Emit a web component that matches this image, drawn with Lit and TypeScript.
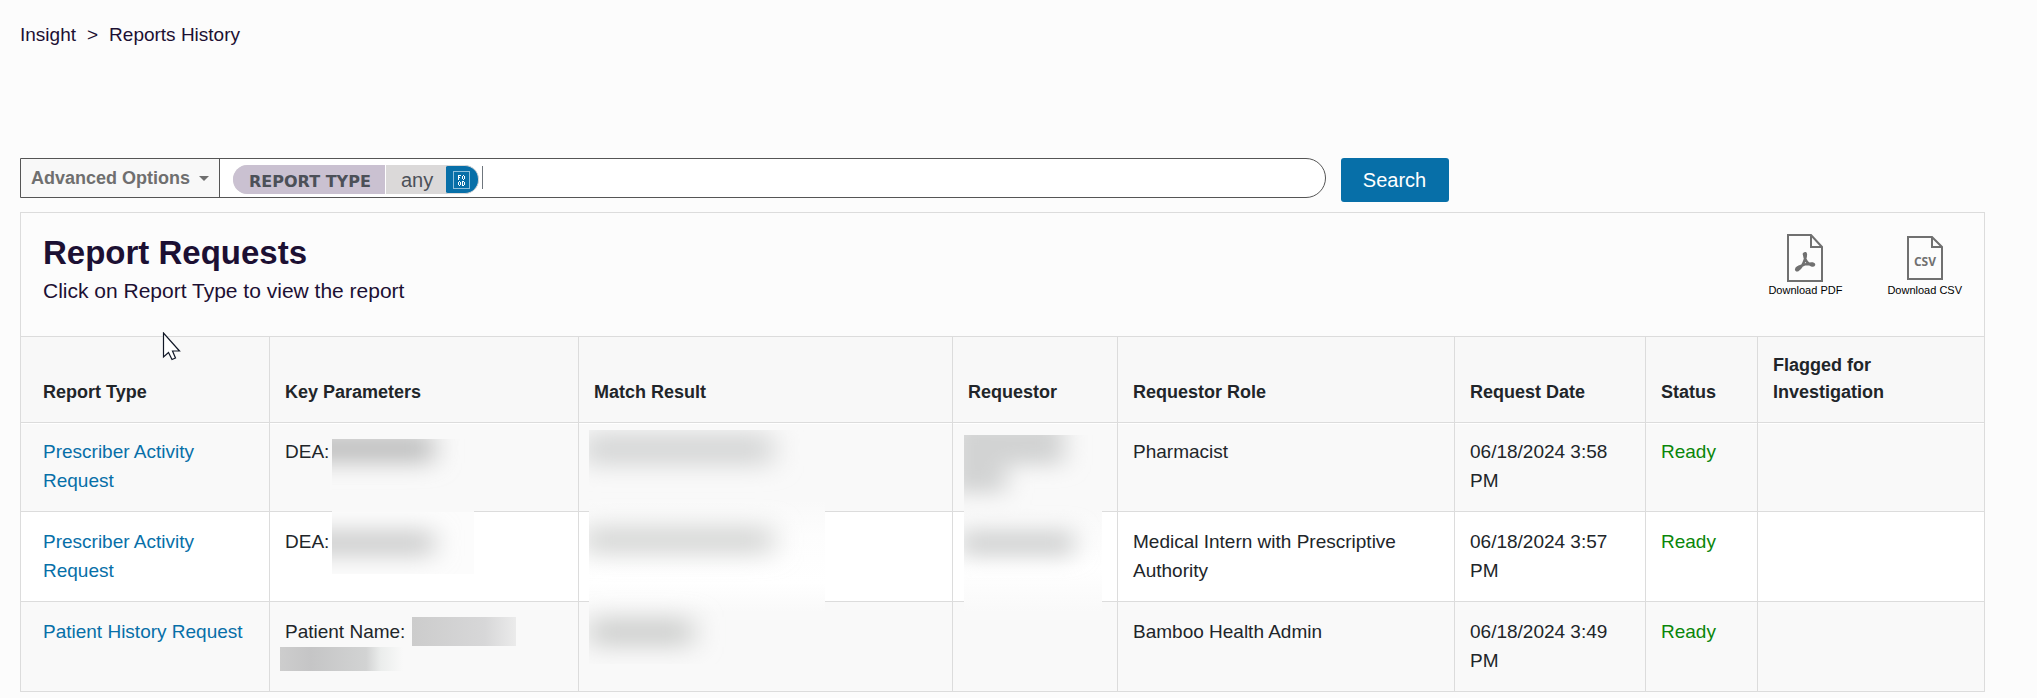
import { LitElement, html, css, svg } from "lit";
import { customElement } from "lit/decorators.js";

interface ReportRow {
  type: string;
  param: string;
  mask: string;
  role: string;
  date: string;
}

const ROWS: ReportRow[] = [
  { type: "Prescriber Activity Request", param: "DEA:", mask: "dea-a", role: "Pharmacist", date: "06/18/2024 3:58 PM" },
  { type: "Prescriber Activity Request", param: "DEA:", mask: "dea-b", role: "Medical Intern with Prescriptive Authority", date: "06/18/2024 3:57 PM" },
  { type: "Patient History Request", param: "Patient Name:", mask: "name", role: "Bamboo Health Admin", date: "06/18/2024 3:49 PM" },
];

const HEADS = ["Report Type", "Key Parameters", "Match Result", "Requestor", "Requestor Role", "Request Date", "Status", "Flagged for Investigation"];

@customElement("app-root")
export class AppRoot extends LitElement {
  static styles = css`
    :host {
      display: block;
      box-sizing: border-box;
      min-height: 100vh;
      padding: 20px 52px 0 20px;
      background: #fcfcfc;
      color: #212529;
      font: 19px/29px "Liberation Sans", Arial, sans-serif;
    }
    * { box-sizing: border-box; }
    .crumbs { display: flex; gap: 11px; color: #1c1033; }
    .crumbs a { color: inherit; text-decoration: none; }
    .search { display: flex; align-items: flex-start; gap: 15px; margin-top: 109px; width: 72.7%; }
    .bar { display: flex; flex: 1; height: 40px; border: 1px solid #555; border-radius: 0 20px 20px 0; background: #fff; overflow: hidden; }
    .advanced { display: flex; align-items: center; gap: 9px; width: 199px; padding: 0 10px; border: 0; border-right: 1px solid #555; background: #f8f8f8; color: #6f6f6f; font: bold 18px/29px "Liberation Sans", Arial, sans-serif; white-space: nowrap; }
    .caret { width: 0; border: 5px solid transparent; border-top-color: #6f6f6f; border-bottom: 0; }
    .tag { display: flex; height: 29px; margin: 6px 0 0 13px; border-radius: 15px; background: #dbd9d9; overflow: hidden; color: #4c5058; }
    .tag-name { width: 153px; padding: 2px 0 0 16px; border-right: 1px solid #fff; background: #cac1d1; font: bold 16px/29px "DejaVu Sans", sans-serif; }
    .tag-value { width: 60px; padding-left: 15px; font-size: 20px; line-height: 30px; }
    .remove { display: flex; align-items: center; width: 33px; padding: 0 0 0 7px; border: 1px solid #dbd9d9; border-left: 0; border-radius: 2px 14px 14px 2px; background: #076fa8; }
    .query { flex: 1; min-width: 0; margin: 7px 0 8px 3px; border: 0; border-left: 1px solid #6f767d; outline: 0; background: transparent; }
    .go { width: 108px; height: 44px; padding: 0; border: 0; border-radius: 3px; background: #076fa8; color: #fff; font: 20px/44px "Liberation Sans", Arial, sans-serif; }
    .panel { margin-top: 10px; border: 1px solid #dcdcdc; border-bottom: 0; }
    .head { display: flex; justify-content: space-between; height: 123px; padding: 17px 22px 0; color: #1c1033; }
    h1 { margin: 0; font-size: 33px; line-height: 46px; }
    .head p { margin: 0; font-size: 21px; line-height: 30px; }
    .downloads { display: flex; gap: 45px; }
    .downloads button { display: flex; flex-direction: column; align-items: center; padding: 4px 0 0; border: 0; background: none; color: #000; font: 11px/16px "Liberation Sans", Arial, sans-serif; align-self: flex-start; }
    table { width: 100%; table-layout: fixed; border-collapse: separate; border-spacing: 0; }
    th, td { padding: 15px 14px 16px 15px; border: 0 solid #dcdcdc; border-left-width: 1px; text-align: left; vertical-align: top; }
    th { border-top-width: 1px; border-bottom-width: 1px; background: #f8f8f8; font-size: 18px; line-height: 27px; vertical-align: bottom; }
    td { border-bottom-width: 1px; background: #fff; }
    th:first-child, td:first-child { padding-left: 22px; border-left-width: 0; }
    tbody tr:nth-child(odd) td { background: #f9f9f9; }
    tbody tr:first-child td { padding-top: 14px; box-shadow: inset 0 1px #fff; }
    td a { color: #076fa8; text-decoration: none; }
    .ready { color: #0a860a; }
    .c1 { width: 248px; }
    .c2 { width: 309px; }
    .c3 { width: 374px; }
    .c4 { width: 165px; }
    .c5 { width: 337px; }
    .c6 { width: 191px; }
    .c7 { width: 112px; }
    .key { position: relative; }
    .overlay { position: absolute; pointer-events: none; }
    .mask-dea-a { left: 62px; top: 16px; width: 142px; height: 73px; }
    .mask-dea-b { left: 62px; top: 0; width: 142px; height: 62px; }
    .mask-name { left: 10px; top: 15px; width: 237px; height: 54px; }
    .match { left: 568px; top: 94px; width: 236px; height: 234px; }
    .person { left: 943px; top: 99px; width: 138px; height: 177px; }
    .pointer { left: 162px; top: 332px; }
    .table-box { position: relative; }
  `;

  private redaction(kind: string) {
    if (kind === "name") {
      return html`<svg class="overlay mask-name" viewBox="0 0 237 54">
        <defs>
          <linearGradient id="n1"><stop offset="0" stop-color="#cccccc" /><stop offset=".7" stop-color="#d7d7d8" /><stop offset="1" stop-color="#ebebeb" /></linearGradient>
          <linearGradient id="n2"><stop offset="0" stop-color="#cdcdcd" /><stop offset=".25" stop-color="#c5c5c6" /><stop offset=".7" stop-color="#d2d3d3" /><stop offset=".82" stop-color="#ebedec" /><stop offset="1" stop-color="#f9f9f9" /></linearGradient>
        </defs>
        <rect x="132" y="0" width="104" height="29" fill="url(#n1)" /><rect x="0" y="30" width="123" height="24" fill="url(#n2)" />
      </svg>`;
    }
    const first = kind === "dea-a";
    return html`<svg class="overlay mask-${kind}" viewBox="0 0 142 ${first ? 73 : 62}">
      <defs>
        <filter id="blur" x="-50%" y="-120%" width="200%" height="340%"><feGaussianBlur stdDeviation="13 11" /></filter>
      </defs>
      <rect width="142" height=${first ? 73 : 62} fill=${first ? "#f9f9f9" : "#fcfcfc"} />
      <rect x="-40" y=${first ? -6 : 18} width="142" height=${first ? 30 : 26} fill=${first ? "#bfc0c0" : "#cdcece"} filter="url(#blur)" />
    </svg>`;
  }

  private matchMask = svg`
    <defs>
      <filter id="soft" x="-30%" y="-120%" width="160%" height="340%"><feGaussianBlur stdDeviation="14 11" /></filter>
      <linearGradient id="ground" x1="0" y1="0" x2="0" y2="1">
        <stop offset="0" stop-color="#f9f9f9" /><stop offset=".3" stop-color="#f9f9f9" /><stop offset=".45" stop-color="#fdfdfd" /><stop offset=".65" stop-color="#ffffff" /><stop offset=".78" stop-color="#f9f9f9" /><stop offset="1" stop-color="#f9f9f9" />
      </linearGradient>
    </defs>
    <path d="M0 0H236V183H136V234H0Z" fill="url(#ground)" />
    <g filter="url(#soft)">
      <rect x="-6" y="2" width="190" height="34" fill="#d7d8d8" /><rect x="-6" y="95" width="190" height="30" fill="#d8d9d8" /><rect x="0" y="187" width="104" height="30" fill="#d0d1d0" />
    </g>`;

  render() {
    return html`
      <nav class="crumbs" aria-label="Breadcrumb"><a href="#insight">Insight</a><span>&gt;</span><span>Reports History</span></nav>
      <form class="search" @submit=${(e: Event) => e.preventDefault()}>
        <div class="bar">
          <button class="advanced" type="button">Advanced Options<span class="caret"></span></button>
          <div class="tag">
            <span class="tag-name">REPORT TYPE</span><span class="tag-value">any</span>
            <button class="remove" type="button" aria-label="Remove filter">
              <svg width="17" height="18" viewBox="0 0 17 18" fill="none" shape-rendering="crispEdges">
                <rect x=".5" y=".5" width="16" height="17" stroke="#8fc0dc" />
                <path stroke="#fff" d="M5.500 4v5M5 4.500h3M5 6.500h2M9.500 5v3M10 4.500h1M11.500 5v3M10 8.500h1M5.500 11v3M6 10.500h1M7.500 11v3M6 14.500h1M9.500 10v5M9 10.500h2M9 14.500h2M11.500 11v3" />
              </svg>
            </button>
          </div>
          <input class="query" type="text" aria-label="Search filters" />
        </div>
        <button class="go" type="submit">Search</button>
      </form>
      <section class="panel">
        <header class="head">
          <div><h1>Report Requests</h1><p>Click on Report Type to view the report</p></div>
          <div class="downloads">
            <button type="button">
              <svg width="36" height="48" viewBox="0 0 36 48" fill="none" stroke="#707070" stroke-width="2">
                <path d="M1 1H24L35 13V47H1ZM24 1V13H35" />
                <path d="M17 20C19.500 17.500 19 22 18 25C16.800 29 14 34 11 36C8.500 37 8.500 34.500 11.500 33C15.500 30.800 21.500 29.300 25.500 29.500C28 30 27 32 24.500 31.300C21 30.300 17.500 26 17 20Z" stroke-width="2.600" stroke-linejoin="round" />
              </svg>
              Download PDF
            </button>
            <button type="button">
              <svg width="36" height="48" viewBox="0 0 36 48" fill="none" stroke="#707070" stroke-width="2">
                <path d="M1 3H25L35 13V45H1ZM25 3V13H35" />
                <text x="18" y="32" text-anchor="middle" fill="#707070" stroke="none" font-family="Liberation Sans Narrow, Open Sans, sans-serif" font-weight="bold" font-size="12">CSV</text>
              </svg>
              Download CSV
            </button>
          </div>
        </header>
        <div class="table-box">
          <table>
            <colgroup><col class="c1" /><col class="c2" /><col class="c3" /><col class="c4" /><col class="c5" /><col class="c6" /><col class="c7" /><col /></colgroup>
            <thead><tr>${HEADS.map((h) => html`<th scope="col">${h}</th>`)}</tr></thead>
            <tbody>
              ${ROWS.map((r) => html`<tr>
                <td><a href="#report">${r.type}</a></td>
                <td class="key">${r.param}${this.redaction(r.mask)}</td>
                <td></td><td></td>
                <td>${r.role}</td><td>${r.date}</td><td class="ready">Ready</td><td></td>
              </tr>`)}
            </tbody>
          </table>
          <svg class="overlay match" viewBox="0 0 236 234">${this.matchMask}</svg>
          <svg class="overlay person" viewBox="0 0 138 177">
            <defs>
              <filter id="haze" x="-40%" y="-90%" width="180%" height="280%"><feGaussianBlur stdDeviation="12 10" /></filter>
              <linearGradient id="wash" x1="0" y1="0" x2="0" y2="1"><stop offset=".42" stop-color="#f9f9f9" /><stop offset=".75" stop-color="#ffffff" /><stop offset="1" stop-color="#f9f9f9" /></linearGradient>
            </defs>
            <rect width="138" height="177" fill="url(#wash)" />
            <g filter="url(#haze)"><path d="M-14 -14H100V30H42V58H-14Z" fill="#d2d3d3" /><rect x="-4" y="94" width="114" height="28" fill="#d4d5d5" /></g>
          </svg>
        </div>
      </section>
      <svg class="overlay pointer" width="20" height="30" viewBox="0 0 20 30"><path d="M1.500 1V25L6.500 20.500L10 27.500L13.500 26L10.500 19H17.500Z" fill="#fff" stroke="#111827" stroke-width="1.200" /></svg>
    `;
  }
}
